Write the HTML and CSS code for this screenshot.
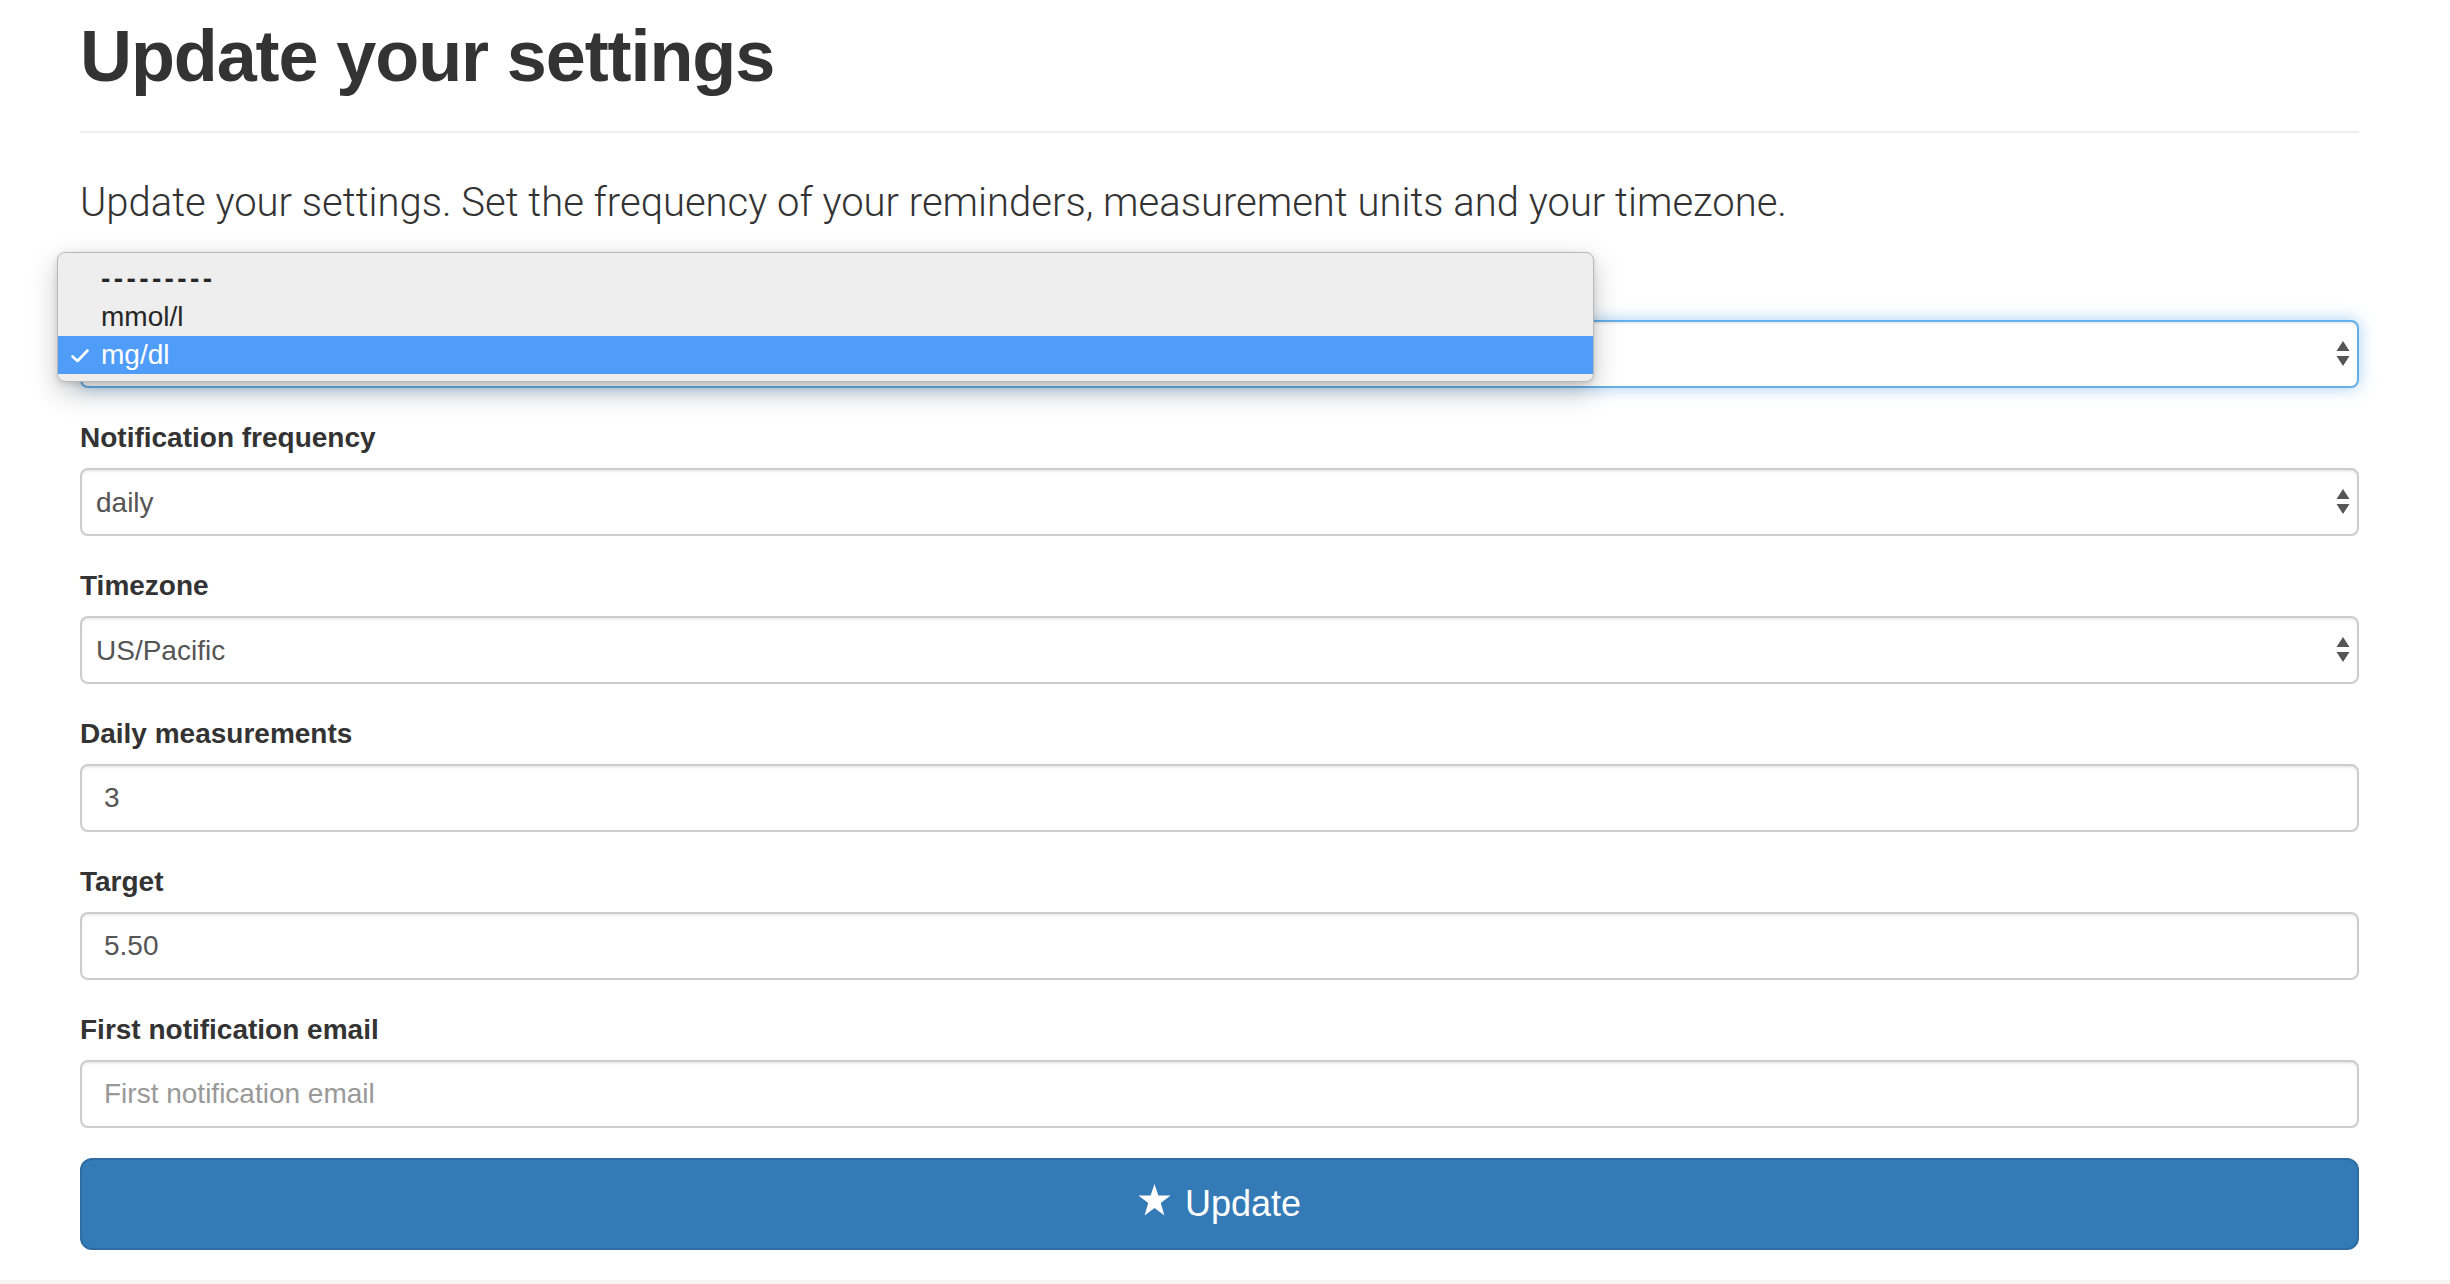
FILE: index.html
```html
<!DOCTYPE html>
<html lang="en">
<head>
<meta charset="utf-8">
<title>Update your settings</title>
<link rel="stylesheet" href="styles.css">
</head>
<body>
<div class="page">
  <div class="page-header">
    <h1 class="title">Update your settings</h1>
  </div>
  <p class="lead">Update your settings. Set the frequency of your reminders, measurement units and your timezone.</p>
  <form class="form">
    <div class="form-group">
      <label class="label" for="units">Measurement unit</label>
      <div class="select-wrap">
        <select id="units" class="control select focus">
          <option>---------</option>
          <option>mmol/l</option>
          <option selected>mg/dl</option>
        </select>
        <svg class="arrows" width="14" height="26" viewBox="0 0 14 26"><path d="M7 0 L13.5 10 H0.5 Z M0.5 15 H13.5 L7 25 Z" fill="#555"/></svg>
      </div>
    </div>
    <div class="form-group">
      <label class="label" for="freq">Notification frequency</label>
      <div class="select-wrap">
        <select id="freq" class="control select">
          <option selected>daily</option>
        </select>
        <svg class="arrows" width="14" height="26" viewBox="0 0 14 26"><path d="M7 0 L13.5 10 H0.5 Z M0.5 15 H13.5 L7 25 Z" fill="#555"/></svg>
      </div>
    </div>
    <div class="form-group">
      <label class="label" for="tz">Timezone</label>
      <div class="select-wrap">
        <select id="tz" class="control select">
          <option selected>US/Pacific</option>
        </select>
        <svg class="arrows" width="14" height="26" viewBox="0 0 14 26"><path d="M7 0 L13.5 10 H0.5 Z M0.5 15 H13.5 L7 25 Z" fill="#555"/></svg>
      </div>
    </div>
    <div class="form-group">
      <label class="label" for="daily">Daily measurements</label>
      <input id="daily" class="control input" type="text" value="3">
    </div>
    <div class="form-group">
      <label class="label" for="target">Target</label>
      <input id="target" class="control input" type="text" value="5.50">
    </div>
    <div class="form-group">
      <label class="label" for="email">First notification email</label>
      <input id="email" class="control input" type="text" placeholder="First notification email">
    </div>
    <button type="button" class="btn">
      <svg class="star" width="33" height="32" viewBox="0 0 33 32"><polygon points="16.5,0 20.4,11.6 32.6,11.6 22.8,18.9 26.4,31.5 16.5,24 6.6,31.5 10.2,18.9 0.4,11.6 12.6,11.6" fill="#fff"/></svg>
      <span>Update</span>
    </button>
  </form>
</div>
<footer class="footer"></footer>

<div class="menu">
  <div class="menu-item">---------</div>
  <div class="menu-item">mmol/l</div>
  <div class="menu-item active">
    <svg class="check" width="18" height="14" viewBox="0 0 18 14"><polyline points="1.5,7.5 6.5,12 16.5,1.5" fill="none" stroke="#fff" stroke-width="2.6" stroke-linecap="round" stroke-linejoin="round"/></svg>
    mg/dl
  </div>
</div>
</body>
</html>
```

FILE: styles.css
```css
html, body {
  margin: 0;
  padding: 0;
  background: #fff;
}

body {
  font-family: "Liberation Sans", Arial, Helvetica, sans-serif;
  color: #333;
  position: relative;
}

.page {
  margin-left: 80px;
  width: 2279px;
}

.page-header {
  padding-top: 16px;
  padding-bottom: 35px;
  border-bottom: 2px solid #eee;
}

.title {
  margin: 0;
  font-size: 72px;
  line-height: 80px;
  font-weight: 700;
  letter-spacing: -1.1px;
  color: #333;
}

.lead {
  margin: 40px 0 0;
  font-family: Roboto, "Liberation Sans", sans-serif;
  font-weight: 300;
  font-size: 40px;
  line-height: 60px;
  color: #333;
}

.form {
  margin-top: 37px;
}

.form-group {
  margin-bottom: 30px;
}

.label {
  display: block;
  font-size: 28px;
  line-height: 40px;
  font-weight: 700;
  margin-bottom: 10px;
  color: #333;
}

.control {
  display: block;
  box-sizing: border-box;
  width: 100%;
  height: 68px;
  margin: 0;
  border: 2px solid #ccc;
  border-radius: 8px;
  background: #fff;
  font-family: "Liberation Sans", Arial, sans-serif;
  font-size: 28px;
  color: #555;
  box-shadow: inset 0 2px 2px rgba(0, 0, 0, 0.075);
  outline: none;
}

.select-wrap {
  position: relative;
}

.select {
  -webkit-appearance: none;
  appearance: none;
  padding: 0 40px 0 14px;
}

.select.focus {
  border-color: #66afe9;
  box-shadow: inset 0 2px 2px rgba(0, 0, 0, 0.075), 0 0 16px rgba(102, 175, 233, 0.6);
}

.arrows {
  position: absolute;
  right: 9px;
  top: 50%;
  transform: translateY(-50%);
  pointer-events: none;
}

.input {
  padding: 0 22px;
}

.input::placeholder {
  color: #999;
}

.btn {
  display: flex;
  align-items: center;
  justify-content: center;
  gap: 14px;
  box-sizing: border-box;
  width: 100%;
  height: 92px;
  margin: 0;
  padding: 0;
  border: 2px solid #2e6da4;
  border-radius: 12px;
  background: #337ab7;
  color: #fff;
  font-family: "Liberation Sans", Arial, sans-serif;
  font-size: 36px;
  line-height: 48px;
  cursor: pointer;
}

.star {
  margin-bottom: 9px;
}

.footer {
  margin-top: 30px;
  height: 60px;
  background: #f4f4f4;
}

.menu {
  position: absolute;
  left: 57px;
  top: 252px;
  width: 1537px;
  box-sizing: border-box;
  padding: 7px 0;
  background: #eeeeee;
  border: 1px solid #b9b9b9;
  border-radius: 8px;
  box-shadow: 0 10px 28px rgba(0, 0, 0, 0.22), 0 2px 6px rgba(0, 0, 0, 0.12);
  font-family: "Liberation Sans", Arial, sans-serif;
  font-size: 28px;
  color: #262626;
}

.menu-item {
  position: relative;
  height: 38px;
  line-height: 38px;
  padding-left: 43px;
}

.menu-item:first-child {
  letter-spacing: 3.4px;
  font-weight: 700;
}

.menu-item.active {
  background: #4f9cf9;
  color: #fff;
}

.check {
  position: absolute;
  left: 13px;
  top: 13px;
}
```
